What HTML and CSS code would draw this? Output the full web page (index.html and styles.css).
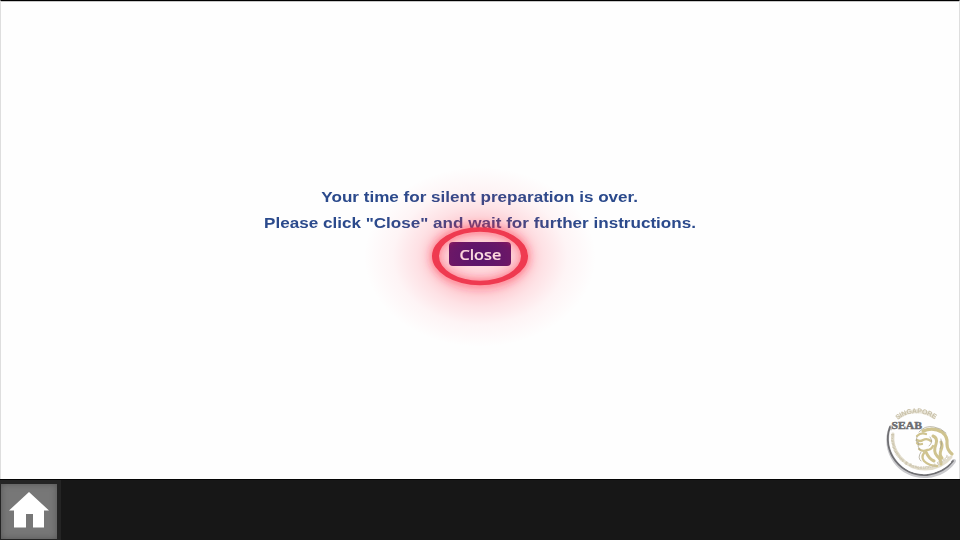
FILE: index.html
```html
<!DOCTYPE html>
<html lang="en">
<head>
<meta charset="utf-8">
<title>Silent preparation</title>
<link rel="stylesheet" href="styles.css">
</head>
<body>
<main class="stage">
  <p class="message">Your time for silent preparation is over.</p>
  <p class="message">Please click "Close" and wait for further instructions.</p>
  <div class="action">
    <button class="close"><span class="close-label">Close</span></button>
    <svg class="highlight" width="260" height="200" viewBox="0 0 260 200" aria-hidden="true">
      <defs>
        <radialGradient id="glow">
          <stop offset="0" stop-color="#ff2540" stop-opacity=".12"/>
          <stop offset=".25" stop-color="#ff2540" stop-opacity=".22"/>
          <stop offset=".4" stop-color="#ff2540" stop-opacity=".23"/>
          <stop offset=".55" stop-color="#ff2540" stop-opacity=".13"/>
          <stop offset=".75" stop-color="#ff2540" stop-opacity=".045"/>
          <stop offset="1" stop-color="#ff2540" stop-opacity="0"/>
        </radialGradient>
        <filter id="soft" x="-30%" y="-40%" width="160%" height="180%"><feGaussianBlur stdDeviation="4.5"/></filter>
      </defs>
      <ellipse cx="130" cy="100" rx="116" ry="90" fill="url(#glow)"/>
      <ellipse cx="130" cy="99.500" rx="45" ry="27" fill="none" stroke="#ff2540" stroke-opacity=".55" stroke-width="8" filter="url(#soft)"/>
      <path fill="#ef3a50" fill-rule="evenodd" d="M82 99.200a48 29 0 1 0 96 0a48 29 0 1 0-96 0M89 99.200a41 24.500 0 1 0 82 0a41 24.500 0 1 0-82 0"/>
    </svg>
  </div>
  <svg class="seal" width="76" height="76" viewBox="0 0 76 76" role="img" aria-label="SEAB">
    <defs>
      <path id="arc-top" d="M14.500 17A30 30 0 0 1 52 16.500"/>
      <path id="arc-low" d="M8 31C6 66 46 77 67 53"/>
      <filter id="fuzz" x="-10%" y="-10%" width="120%" height="120%"><feGaussianBlur stdDeviation=".55"/></filter>
    </defs>
    <g filter="url(#fuzz)" fill="none" stroke-linecap="round">
      <path d="M8 24C-2 48 17 75 44 73Q62 71 71 58" stroke="#c9c9cc" stroke-width="4"/>
      <path d="M7 24C-2 48 18 74 44 72Q61 70 70 58" stroke="#6f6f73" stroke-width="1.800"/>
      <path d="M8 28C3 50 21 72 44 70Q58 68 67 59" stroke="#fff" stroke-width="2"/>
      <path d="M10 31C8 47 21 66 42 66Q58 66 68 54" stroke="#e2ddcc" stroke-width="3"/>
      <path d="M16 14A30 30 0 0 1 51 14" stroke="#e9e5d8" stroke-width="4"/>
      <path d="M40 28Q50 24 59 29Q65 34 64 41Q64 47 69 51" stroke="#cfc38f" stroke-width="3.200"/>
      <path d="M34 33q4-4 9-2M34 37q3 2 6 0q4-2 8 1M34 40q1 2 5 1M36 46q3 3 8 1q4 0 6-4M41 50q-3 4 0 8q5 5 13 5" stroke="#cfc38f" stroke-width="2.300"/>
      <path d="M50 33q5 2 3 8q-3 8 1 12q4 3 4 8M43 49q3 7 8 9M58 39q2 4 0 8q-2 5 1 8" stroke="#cfc38f" stroke-width="3"/>
      <path d="M36 29Q42 22 51 24Q58 25 63 30M34 34l-1 4 3 2-1 3 2 4M47 34q4 5-1 9M58 36q2 5-1 10M38 49q-4 6 0 9" stroke="#a39d89" stroke-width=".7"/>
      <text class="rim"><textPath href="#arc-top" textLength="40">SINGAPORE</textPath></text>
      <text class="rim rim-low"><textPath href="#arc-low" textLength="83">Examinations &amp; Assessment Board</textPath></text>
    </g>
    <text class="seal-name" x="8.500" y="26" textLength="30.500" lengthAdjust="spacingAndGlyphs">SEAB</text>
  </svg>
</main>
<footer class="bar">
  <button class="home" aria-label="Home">
    <svg width="40" height="36" viewBox="0 0 40 36"><path fill="#fff" d="M20 0L40 18.500H35V35.500H24V22H17V35.500H5V18.500H0z"/></svg>
  </button>
</footer>
</body>
</html>
```
FILE: styles.css
```css
* { box-sizing: border-box; }
body {
  margin: 0;
  height: 540px;
  display: flex;
  flex-direction: column;
  overflow: hidden;
  background: #fefefe;
  font-family: "Liberation Sans", Arial, sans-serif;
}
.stage {
  position: relative;
  height: 479px;
  padding-top: 182px;
  display: flex;
  flex-direction: column;
  align-items: center;
  border-top: 1px solid #000;
  border-left: 1px solid #dedede;
  border-right: 1px solid #dedede;
  box-shadow: inset 0 1px #c8c8c8;
}
.message {
  margin: 0;
  font-size: 15.5px;
  font-weight: 700;
  line-height: 27px;
  height: 26px;
  color: #2b4a8c;
  white-space: nowrap;
  transform: scaleX(1.102);
}
.action {
  position: relative;
  margin-top: 7px;
  display: flex;
}
.close {
  width: 62px;
  height: 24px;
  padding: 0;
  border: 0;
  border-radius: 4px;
  background: #411372;
  color: #fff;
  font: 500 15px/23px "Noto Sans", sans-serif;
}
.close-label { display: inline-block; transform: scaleX(1.08); -webkit-text-stroke: .2px #fff; }
.highlight {
  position: absolute;
  left: -99px;
  top: -85px;
  pointer-events: none;
}
.seal {
  position: absolute;
  right: 0;
  bottom: 0;
  overflow: visible;
}
.rim { font: 700 7px "Liberation Sans", sans-serif; fill: #c9c1a9; }
.rim-low { font-size: 4.5px; }
.seal-name { font: 700 11px "Liberation Serif", serif; fill: #6c6c70; stroke: #6c6c70; stroke-width: .5px; }
.bar {
  height: 61px;
  padding-top: 4px;
  background: #171717;
  border-top: 1px solid #050505;
  box-shadow: inset 61px 0 #242424;
}
.home {
  width: 56px;
  height: 55px;
  margin-left: 1px;
  padding: 0 0 3px;
  border: 0;
  display: flex;
  align-items: center;
  justify-content: center;
  background: #777;
  box-shadow: inset 0 0 6px #555;
}
```
